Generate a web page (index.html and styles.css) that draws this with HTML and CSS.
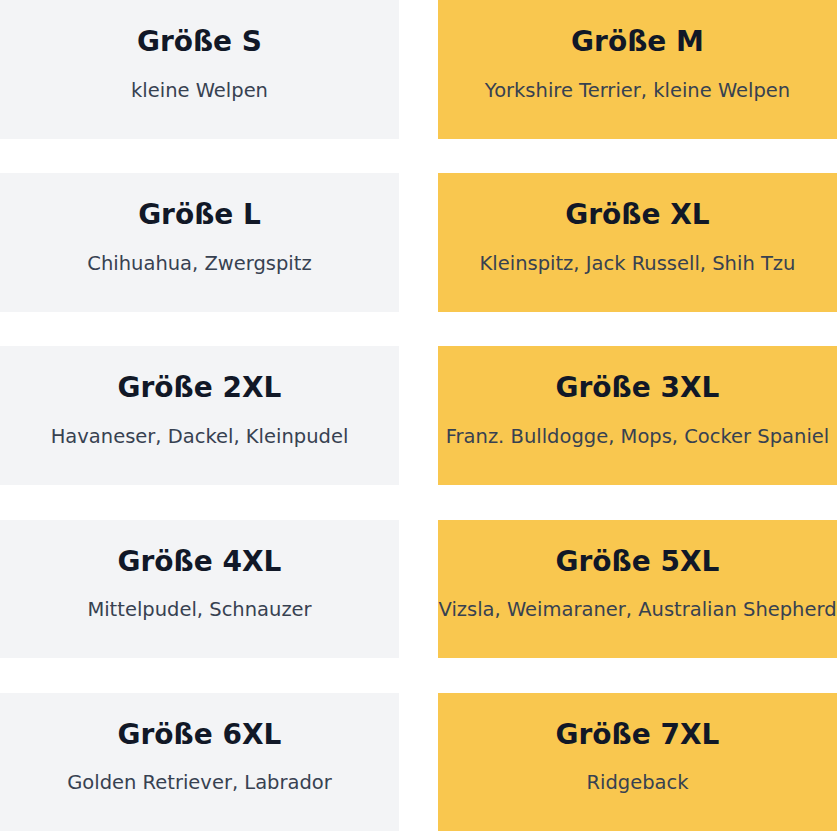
FILE: index.html
```html
<!DOCTYPE html>
<html lang="de">
<head>
<meta charset="utf-8">
<link rel="stylesheet" href="styles.css">
</head>
<body>
<div class="grid">
  <div class="card gray"><h3 class="title">Größe S</h3><p class="sub">kleine Welpen</p></div>
  <div class="card yellow"><h3 class="title">Größe M</h3><p class="sub">Yorkshire Terrier, kleine Welpen</p></div>
  <div class="card gray"><h3 class="title">Größe L</h3><p class="sub">Chihuahua, Zwergspitz</p></div>
  <div class="card yellow"><h3 class="title">Größe XL</h3><p class="sub">Kleinspitz, Jack Russell, Shih Tzu</p></div>
  <div class="card gray"><h3 class="title">Größe 2XL</h3><p class="sub">Havaneser, Dackel, Kleinpudel</p></div>
  <div class="card yellow"><h3 class="title">Größe 3XL</h3><p class="sub">Franz. Bulldogge, Mops, Cocker Spaniel</p></div>
  <div class="card gray"><h3 class="title">Größe 4XL</h3><p class="sub">Mittelpudel, Schnauzer</p></div>
  <div class="card yellow"><h3 class="title">Größe 5XL</h3><p class="sub">Vizsla, Weimaraner, Australian Shepherd</p></div>
  <div class="card gray"><h3 class="title">Größe 6XL</h3><p class="sub">Golden Retriever, Labrador</p></div>
  <div class="card yellow"><h3 class="title">Größe 7XL</h3><p class="sub">Ridgeback</p></div>
</div>
</body>
</html>
```
FILE: styles.css
```css
html, body {
  margin: 0;
  padding: 0;
  background: #ffffff;
  font-family: "DejaVu Sans", sans-serif;
}
.grid {
  display: grid;
  grid-template-columns: 1fr 1fr;
  column-gap: 39px;
  row-gap: 34.6px;
}
.card {
  box-sizing: border-box;
  height: 138.6px;
  padding-top: 25px;
  text-align: center;
}
.gray { background: #f3f4f6; }
.yellow { background: #f9c74f; }
.title {
  margin: 0;
  font-size: 28px;
  line-height: 34px;
  font-weight: 700;
  color: #111827;
}
.sub {
  margin: 17.5px 0 0;
  font-size: 19.5px;
  line-height: 27px;
  color: #374151;
}
```
